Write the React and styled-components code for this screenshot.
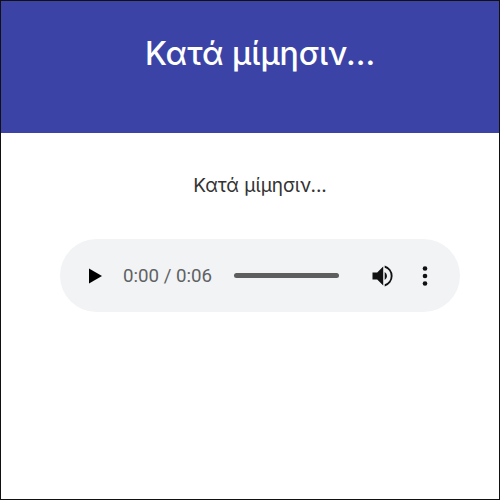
import React from "react";
import styled, { createGlobalStyle } from "styled-components";

const Global = createGlobalStyle`
  html, body { margin: 0; padding: 0; background: #fff; }
`;
const Frame = styled.div`
  box-sizing: border-box;
  width: 500px;
  height: 500px;
  border: 1px solid #111;
  background: #fff;
  display: flex;
  flex-direction: column;
  font-family: Inter, "Liberation Sans", sans-serif;
`;
const Header = styled.header`
  height: 132px;
  background: #3b44a6;
  color: #fff;
  display: flex;
  justify-content: center;
  box-sizing: border-box;
  padding: 33px 0 0 20px;
`;
const Title = styled.h1`
  margin: 0;
  font-size: 32px;
  line-height: 40px;
  font-weight: 500;
`;
const Main = styled.main`
  display: flex;
  flex-direction: column;
  align-items: center;
  padding-left: 20px;
`;
const Caption = styled.p`
  margin: 41px 0 0;
  font-size: 19px;
  line-height: 24px;
  color: #333;
`;
const Player = styled.div`
  margin-top: 41px;
  width: 400px;
  height: 73px;
  box-sizing: border-box;
  border-radius: 37px;
  background: #f1f3f4;
  display: flex;
  align-items: center;
  padding: 0 26px 0 27px;
`;
const IconSvg = styled.svg`
  display: block;
  flex: none;
`;
const Time = styled.span`
  margin-left: 20px;
  font-family: Roboto, "Liberation Sans", sans-serif;
  font-size: 18.7px;
  color: #5f6164;
  white-space: nowrap;
`;
const Track = styled.div`
  margin-left: 22px;
  width: 105px;
  height: 5px;
  border-radius: 3px;
  background: #5e5e5e;
  flex: none;
`;
const VolumeIcon = styled(IconSvg)`
  margin-left: 32px;
`;
const MenuIcon = styled(IconSvg)`
  margin-left: 26px;
`;

export default function App() {
  return (
    <Frame>
      <Global />
      <Header>
        <Title>Κατά μίμησιν...</Title>
      </Header>
      <Main>
        <Caption>Κατά μίμησιν...</Caption>
        <Player>
          <IconSvg width="16" height="18" viewBox="0 0 16 18">
            <path d="M2 1.5 L15 9 L2 16.5 Z" fill="#000" />
          </IconSvg>
          <Time>0:00 / 0:06</Time>
          <Track />
          <VolumeIcon width="24" height="24" viewBox="0 0 24 24">
            <path fill="#111" d="M1.5 8.5v7h4.7l6 6V2.5l-6 6z" />
            <path fill="#111" d="M16 12a4.5 4.5 0 0 0-2.3-4v8a4.5 4.5 0 0 0 2.3-4z" />
            <path fill="#111" d="M13.7 1.6v2.2a8.6 8.6 0 0 1 0 16.4v2.2a10.8 10.8 0 0 0 0-20.8z" />
          </VolumeIcon>
          <MenuIcon width="8" height="22" viewBox="0 0 8 22">
            <circle cx="4" cy="3.5" r="2.3" fill="#111" />
            <circle cx="4" cy="11" r="2.3" fill="#111" />
            <circle cx="4" cy="18.5" r="2.3" fill="#111" />
          </MenuIcon>
        </Player>
      </Main>
    </Frame>
  );
}
